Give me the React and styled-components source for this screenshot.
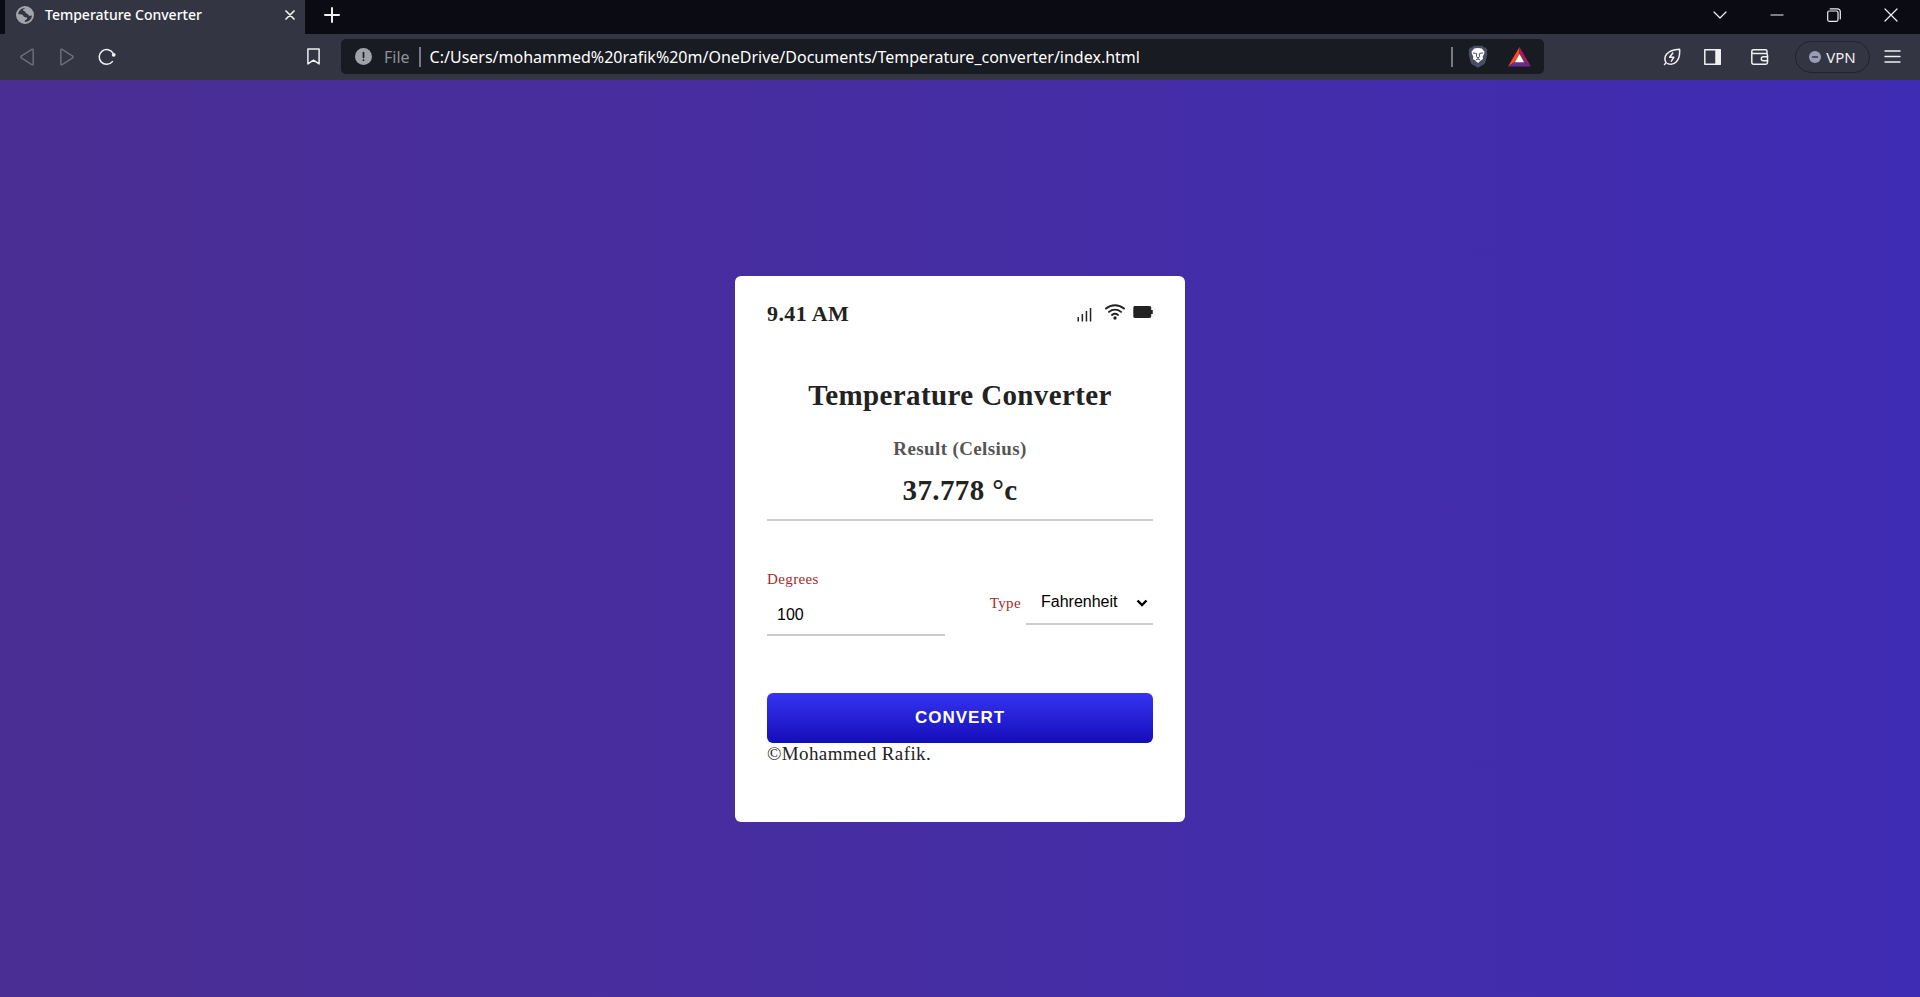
import React, { useState } from 'react';
import styled, { createGlobalStyle } from 'styled-components';

const GlobalStyle = createGlobalStyle`
  *, *::before, *::after { box-sizing: border-box; }
  body { margin: 0; }
  button, input, select { font: inherit; color: inherit; margin: 0; }
`;

const Window = styled.div`
  min-height: 100vh;
  display: flex;
  flex-direction: column;
  font-family: 'Noto Sans', 'Open Sans', sans-serif;
`;

const TabStrip = styled.header`
  display: flex;
  height: 34px;
  padding: 0 1px 0 5px;
  background: #0b0b14;
  color: #fff;
`;

const Tab = styled.div`
  display: flex;
  align-items: center;
  gap: 11px;
  width: 300px;
  height: 34px;
  padding: 0 8px 4px 11px;
  background: #333543;
`;

const TabTitle = styled.span`
  flex: 1;
  font-size: 14px;
  font-weight: 500;
  line-height: 20px;
`;

const IconButton = styled.button`
  display: flex;
  align-items: center;
  justify-content: center;
  width: ${(p) => p.$width || 40}px;
  height: 30px;
  padding: 0;
  border: 0;
  background: none;
  color: ${(p) => p.$color || '#f0f0f2'};
`;

const WindowControls = styled.div`
  display: flex;
  margin-left: auto;
`;

const Toolbar = styled.nav`
  display: flex;
  align-items: center;
  height: 46px;
  padding: 0 8px 1px 7px;
  background: #333543;
  color: #f0f0f2;
`;

const BookmarkSlot = styled.div`
  margin-left: 166px;
`;

const AddressBar = styled.div`
  display: flex;
  align-items: center;
  flex: 0 1 1203px;
  min-width: 0;
  height: 35px;
  margin-left: 8px;
  padding: 0 4px 0 14px;
  border-radius: 5px;
  background: #181b21;
`;

const Scheme = styled.label`
  margin-left: 12px;
  color: #8d9099;
  font-size: 16px;
  line-height: 24px;
`;

const Divider = styled.span`
  width: 2px;
  height: 20px;
  margin: 0 ${(p) => p.$gap}px;
  background: #777a82;
`;

const Url = styled.input`
  flex: 1;
  min-width: 0;
  height: 28px;
  padding: 0;
  border: 0;
  outline: 0;
  background: none;
  color: #fff;
  font-size: 16px;
`;

const Actions = styled.div`
  display: flex;
  align-items: center;
  margin-left: auto;
`;

const VpnButton = styled.button`
  display: flex;
  align-items: center;
  justify-content: center;
  gap: 5px;
  width: 75px;
  height: 32px;
  margin: 0 2px 0 7px;
  padding: 0;
  border: 1px solid #20222d;
  border-radius: 16px;
  background: none;
  color: #f0f0f2;
  font-size: 15px;
`;

const Page = styled.main`
  flex: 1;
  display: flex;
  align-items: center;
  justify-content: center;
  padding-top: 20px;
  background: linear-gradient(to right, #4b2e93, #3f2cb4);
  color: #222;
  font-family: 'Liberation Serif', serif;
  font-size: 19px;
  letter-spacing: 0.02em;
`;

const Card = styled.form`
  width: 450px;
  padding: 24px 32px 57px;
  border-radius: 6px;
  background: #fff;
`;

const StatusRow = styled.div`
  display: flex;
  align-items: center;
  justify-content: space-between;
  margin-bottom: 49px;
  font-size: 22px;
  font-weight: 700;
  line-height: 28px;
`;

const StatusIcons = styled.div`
  display: flex;
  align-items: center;
  gap: 8px;
  padding-bottom: 4px;
`;

const Title = styled.h1`
  margin: 0 0 24px;
  font-size: 29px;
  line-height: 36px;
  text-align: center;
`;

const Result = styled.div`
  display: flex;
  flex-direction: column;
  gap: 11px;
  padding-bottom: 11px;
  border-bottom: 2px solid #ccc;
  font-weight: 700;
  text-align: center;
`;

const ResultLabel = styled.span`
  color: #555;
  line-height: 24px;
`;

const ResultValue = styled.output`
  font-size: 29px;
  line-height: 36px;
`;

const Fields = styled.div`
  display: flex;
  align-items: center;
  justify-content: space-between;
  margin: 49px 0 57px;
`;

const DegreesField = styled.div`
  display: flex;
  flex-direction: column;
  gap: 8px;
  width: 178px;
`;

const TypeField = styled.div`
  display: flex;
  align-items: center;
  gap: 5px;
`;

const FieldLabel = styled.label`
  color: brown;
  font-size: 15px;
  line-height: 18px;
`;

const NumberInput = styled.input`
  height: 40px;
  padding: 0 10px;
  border: 0;
  border-bottom: 2px solid #ccc;
  outline: 0;
  background: none;
  color: #000;
  font-family: 'Liberation Sans', sans-serif;
  font-size: 16px;
  letter-spacing: normal;
`;

const SelectBox = styled.div`
  display: grid;
  align-items: center;
  justify-items: end;
  width: 127px;

  > * { grid-area: 1 / 1; }
  > svg { margin-right: 5px; pointer-events: none; color: #000; }
`;

const TypeSelect = styled.select`
  appearance: none;
  width: 100%;
  height: 44px;
  padding: 0 24px 0 15px;
  border: 0;
  border-bottom: 2px solid #ccc;
  border-radius: 0;
  outline: 0;
  background: none;
  color: #000;
  font-family: 'Liberation Sans', sans-serif;
  font-size: 16px;
  letter-spacing: normal;
`;

const ConvertButton = styled.button`
  display: block;
  width: 100%;
  height: 50px;
  padding: 0;
  border: 0;
  border-radius: 6px;
  background: linear-gradient(to bottom, #3734f2, #130db8);
  color: #fff;
  font-family: 'Liberation Sans', sans-serif;
  font-size: 17px;
  font-weight: 700;
  letter-spacing: 1px;
`;

const Copyright = styled.p`
  margin: 0;
  line-height: 22px;
`;

const Icon = ({ w = 18, h = 18, sw = 1.5, children }) => (
  <svg
    width={w}
    height={h}
    viewBox={`0 0 ${w} ${h}`}
    fill="none"
    stroke="currentColor"
    strokeWidth={sw}
    strokeLinecap="round"
    strokeLinejoin="round"
    aria-hidden="true"
  >
    {children}
  </svg>
);

const Globe = () => (
  <Icon>
    <circle cx="9" cy="9" r="8" stroke="#a3a5ac" strokeWidth="2" />
    <path
      d="M9.500 1c-.2 1.500-1.600 1.700-2.300 2.500-.6.800.3 1.600 1.300 1.700 1 .2.800 1.300 1.500 2 .8.700 1.700.3 2 1.300.3.900 1.100 1.300 2.200 1.300 1 0 1.700-.6 2.800-.8C17.500 4.500 14 .8 9.500 1z"
      fill="#a3a5ac"
      stroke="none"
    />
    <path
      d="M1 8.500c1.800-.3 3.800-.2 5.300.3 1.200.4.900 1.700 2.100 2.100 1.300.4 2.300 0 2.700 1.100.3 1-.8 1.600-1.600 2-.9.500-.6 1.900-1.200 3C4.500 17.200 1 13.500 1 8.500z"
      fill="#a3a5ac"
      stroke="none"
    />
  </Icon>
);

const Lion = () => (
  <Icon w={20} h={23}>
    <path d="M5.500.8h9l1.500 1.700 1.800-.1 1.700 2.900-.6 1.500.5 2-2 8.200c-.3 1.100-.9 1.800-1.800 2.400L10 22.700l-5.600-3.300c-.9-.6-1.500-1.300-1.800-2.400l-2-8.200.5-2-.6-1.500 1.700-2.900 1.800.1z" fill="#4b4e62" stroke="none" />
    <path d="M6.200 3.600 10 3.100l3.800.5 2.700 3.200-.5 2.300-1.300 2.400.3 2.500-1.900 1.300L10 17.900l-3.100-2.600L5 14l.3-2.500L4 9.100l-.5-2.300z" fill="#fff" stroke="none" />
    <path d="M5.300 8l2.900.4M14.700 8l-2.900.4M8.700 9l-.4 2.700L10 12.700l1.700-1-.4-2.700M10 12.700v1.100M8.300 14.800l1.700-.9 1.700.9" stroke="#4b4e62" strokeWidth="1" />
  </Icon>
);

const Triangle = () => (
  <svg width="23" height="20" viewBox="0 0 23 20" aria-hidden="true">
    <path d="M11.500 0v7L7.200 14.800 0 19.500z" fill="#ff4724" />
    <path d="M11.500 0v7l4.300 7.800 7.200 4.700z" fill="#9e1f63" />
    <path d="M0 19.500h23l-7.200-4.700H7.200z" fill="#662d91" />
    <path d="M11.500 7l4.600 8.300H6.900z" fill="#fff" />
  </svg>
);

export default function App() {
  const [degrees, setDegrees] = useState('100');
  const [type, setType] = useState('fahrenheit');
  const [result, setResult] = useState('37.778 °c');
  const [target, setTarget] = useState('Celsius');

  const convert = (event) => {
    event.preventDefault();
    const n = Number(degrees);
    if (type === 'fahrenheit') {
      setTarget('Celsius');
      setResult(`${(((n - 32) * 5) / 9).toFixed(3)} °c`);
    } else {
      setTarget('Fahrenheit');
      setResult(`${((n * 9) / 5 + 32).toFixed(3)} °f`);
    }
  };

  return (
    <>
      <GlobalStyle />
      <Window>
        <TabStrip>
          <Tab>
            <Globe />
            <TabTitle>Temperature Converter</TabTitle>
            <IconButton $width={14} aria-label="Close tab">
              <Icon w={10} h={10} sw={1.7}><path d="M1 1l8 8M9 1l-8 8" /></Icon>
            </IconButton>
          </Tab>
          <IconButton $width={54} aria-label="New tab">
            <Icon w={16} h={16} sw={2}><path d="M8 1v14M1 8h14" /></Icon>
          </IconButton>
          <WindowControls>
            <IconButton $width={57} aria-label="Search tabs">
              <Icon w={14} h={8} sw={1.2}><path d="M1 1l6 6 6-6" /></Icon>
            </IconButton>
            <IconButton $width={57} aria-label="Minimize">
              <Icon w={14} h={2} sw={1.2}><path d="M1 1h12" /></Icon>
            </IconButton>
            <IconButton $width={57} aria-label="Restore">
              <Icon w={14} h={14} sw={1.2}>
                <rect x=".7" y="3" width="10.300" height="10.300" rx="1.500" />
                <path d="M3.200.8h7.300a2.800 2.800 0 0 1 2.800 2.800v7.200" />
              </Icon>
            </IconButton>
            <IconButton $width={57} aria-label="Close window">
              <Icon w={14} h={14} sw={1.2}><path d="M1 1l12 12M13 1L1 13" /></Icon>
            </IconButton>
          </WindowControls>
        </TabStrip>

        <Toolbar>
          <IconButton $color="#6b6d7a" aria-label="Back">
            <Icon w={14} h={18}><path d="M11.800 1.300c.7-.4 1.400 0 1.400.8v13.800c0 .8-.7 1.200-1.400.8L1.300 9.800c-.6-.4-.6-1.200 0-1.600z" /></Icon>
          </IconButton>
          <IconButton $color="#6b6d7a" aria-label="Forward">
            <Icon w={14} h={18}><path d="M2.200 1.300C1.500.9.800 1.300.8 2.100v13.800c0 .8.7 1.200 1.400.8l10.500-6.900c.6-.4.6-1.200 0-1.600z" /></Icon>
          </IconButton>
          <IconButton aria-label="Reload">
            <Icon><path d="M14.400 13.600A7.400 7.400 0 1 1 15 5.200" /><circle cx="15.700" cy="6.800" r="1.900" fill="currentColor" stroke="none" /></Icon>
          </IconButton>
          <BookmarkSlot>
            <IconButton aria-label="Bookmark this page">
              <Icon w={13} h={17}><path d="M.9.900h11.200v15L6.500 12.200.9 15.900z" /></Icon>
            </IconButton>
          </BookmarkSlot>
          <AddressBar>
            <Icon w={17} h={17}>
              <circle cx="8.500" cy="8.500" r="8.500" fill="#a0a2ab" stroke="none" />
              <path d="M8.500 4.500v4.800M8.500 12v.2" stroke="#181b21" strokeWidth="1.700" />
            </Icon>
            <Scheme htmlFor="url">File</Scheme>
            <Divider $gap={9} />
            <Url
              id="url"
              defaultValue="C:/Users/mohammed%20rafik%20m/OneDrive/Documents/Temperature_converter/index.html"
            />
            <Divider $gap={5} />
            <IconButton aria-label="Shields"><Lion /></IconButton>
            <IconButton $width={42} aria-label="Rewards"><Triangle /></IconButton>
          </AddressBar>
          <Actions>
            <IconButton aria-label="Energy saver">
              <Icon>
                <path d="M1.500 16.500l1.700-1.700C-.2 9.500 3 2 16.600 1.300c.8 11.600-5.400 17-12 14.300" />
                <path d="M9.800 5L6.600 9.300h4.200L8.300 13.200" />
              </Icon>
            </IconButton>
            <IconButton aria-label="Sidebar">
              <Icon w={17} h={16}><rect x=".8" y=".8" width="15.400" height="14.400" /><path d="M12 1h4.200v14H12z" fill="currentColor" /></Icon>
            </IconButton>
            <IconButton $width={56} aria-label="Wallet">
              <Icon w={18} h={16}>
                <path d="M16 4.500V2.200C16 1.300 15.500.8 14.600.8H2.600C1.500.8.800 1.400.8 2.500v10.700c0 1.200.7 2 2 2h12c1 0 1.700-.7 1.700-1.700V6.200c0-1-.7-1.700-1.700-1.700H2.500C1.500 4.500.8 3.900.8 2.900" />
                <path d="M16.500 7.700h-4.200a2 2 0 0 0 0 4h4.200" />
              </Icon>
            </IconButton>
            <VpnButton>
              <Icon w={12} h={12}><circle cx="6" cy="6" r="6" fill="#9a9bb8" stroke="none" /><path d="M3.500 6h5" stroke="#333543" /></Icon>
              VPN
            </VpnButton>
            <IconButton aria-label="Menu">
              <Icon w={17} h={13} sw={1.4}><path d="M1 1h15M1 6.500h15M1 12h15" /></Icon>
            </IconButton>
          </Actions>
        </Toolbar>

        <Page>
          <Card onSubmit={convert}>
            <StatusRow>
              <span>9.41 AM</span>
              <StatusIcons>
                <svg width="20" height="20" viewBox="0 0 20 20" fill="#222" aria-hidden="true">
                  <path d="M.5 15h1.500v4.500H.5zM4.600 12h1.500v7.500H4.600zM8.700 9h1.500v10.500H8.700zM12.800 6h1.500v13.500h-1.500z" />
                </svg>
                <Icon w={20} h={16} sw={1.9}>
                  <path d="M1 4.600c5.200-4.400 12.800-4.400 18 0M4 7.900c3.500-3 8.500-3 12 0M7 11c1.800-1.400 4.200-1.400 6 0" />
                  <circle cx="10" cy="14" r="1.700" fill="currentColor" stroke="none" />
                </Icon>
                <svg width="20" height="12" viewBox="0 0 20 12" fill="#222" aria-hidden="true">
                  <path d="M2 0h14.500c1 0 1.700.8 1.700 1.700V4h1.600v4h-1.600v2.300c0 1-.8 1.700-1.700 1.700H2c-1 0-1.700-.8-1.700-1.700V1.700C.3.700 1 0 2 0z" />
                </svg>
              </StatusIcons>
            </StatusRow>
            <Title>Temperature Converter</Title>
            <Result>
              <ResultLabel>Result ({target})</ResultLabel>
              <ResultValue htmlFor="degrees type">{result}</ResultValue>
            </Result>
            <Fields>
              <DegreesField>
                <FieldLabel htmlFor="degrees">Degrees</FieldLabel>
                <NumberInput id="degrees" value={degrees} onChange={(e) => setDegrees(e.target.value)} />
              </DegreesField>
              <TypeField>
                <FieldLabel htmlFor="type">Type</FieldLabel>
                <SelectBox>
                  <TypeSelect id="type" value={type} onChange={(e) => setType(e.target.value)}>
                    <option value="fahrenheit">Fahrenheit</option>
                    <option value="celsius">Celsius</option>
                  </TypeSelect>
                  <Icon w={12} h={8} sw={2.4}><path d="M1.500 1.500L6 6l4.500-4.500" strokeLinecap="butt" strokeLinejoin="miter" /></Icon>
                </SelectBox>
              </TypeField>
            </Fields>
            <ConvertButton type="submit">CONVERT</ConvertButton>
            <Copyright>©Mohammed Rafik.</Copyright>
          </Card>
        </Page>
      </Window>
    </>
  );
}
